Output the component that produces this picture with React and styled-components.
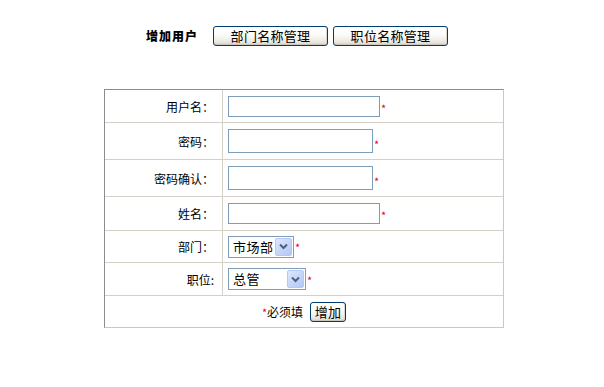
import React from "react";
import styled, { createGlobalStyle } from "styled-components";

const GlobalStyle = createGlobalStyle`
  html, body {
    margin: 0;
    padding: 0;
    background: #fff;
  }
  body {
    font-family: "Noto Sans CJK SC", "DejaVu Sans", sans-serif;
    font-size: 12px;
    color: #000;
  }
`;

const Page = styled.div`
  width: 400px;
  margin: 0 auto;
  padding: 26px 0 0 4px;
`;

const Header = styled.div`
  display: flex;
  align-items: center;
  height: 20px;
  padding-left: 42px;
`;

const Title = styled.span`
  font-weight: 900;
  font-size: 12px;
  letter-spacing: 1px;
  width: 67px;
  line-height: 20px;
`;

const XpButton = styled.button`
  height: ${(p) => p.$h || 20}px;
  width: ${(p) => (p.$w ? `${p.$w}px` : "auto")};
  padding: 0;
  margin-right: ${(p) => p.$mr || 0}px;
  border: 1px solid #003c74;
  border-radius: 3px;
  background: linear-gradient(#ffffff 0%, #fbfbf8 45%, #ece9e2 80%, #d6d3cc 100%);
  box-shadow: inset 0 -1px 0 #c9c6be, inset -1px 0 0 #dcd9d2;
  font-family: "Noto Sans CJK SC", "DejaVu Sans", sans-serif;
  font-size: 13px;
  line-height: 16px;
  letter-spacing: 0.3px;
  color: #000;
  cursor: pointer;
`;

const Table = styled.table`
  margin-top: 43px;
  width: 400px;
  border-collapse: separate;
  border-spacing: 0;
  border-top: 1px solid #8c8c8c;
  border-left: 1px solid #8c8c8c;
  border-right: 1px solid #c8c8c8;
  border-bottom: 1px solid #c8c8c8;
`;

const Row = styled.tr`
  height: ${(p) => p.$h}px;
  &:not(:last-child) td {
    border-bottom: 1px solid #d4d0c8;
  }
`;

const Label = styled.td`
  width: 109px;
  padding: 0 8px 0 0;
  text-align: right;
  border-right: 1px solid #d4d0c8;
  font-size: 12px;
  vertical-align: middle;
`;

const Field = styled.td`
  padding: 0 0 0 5px;
  vertical-align: middle;
`;

const Center = styled.td`
  text-align: center;
  vertical-align: middle;
`;

const Line = styled.div`
  display: flex;
  align-items: center;
  justify-content: ${(p) => (p.$center ? "center" : "flex-start")};
`;

const Input = styled.input`
  box-sizing: border-box;
  width: ${(p) => p.$w}px;
  height: ${(p) => p.$h}px;
  border: 1px solid #7f9db9;
  padding: 1px 3px;
  margin: 0;
  font-size: 12px;
  background: #fff;
`;

const Star = styled.span`
  color: #e0003a;
  font-size: 11px;
  line-height: 9px;
  align-self: center;
  margin-top: ${(p) => p.$mt || 4}px;
  margin-left: 1px;
`;

const Select = styled.div`
  box-sizing: border-box;
  display: flex;
  align-items: center;
  width: ${(p) => p.$w}px;
  height: 22px;
  border: 1px solid #7f9db9;
  background: #fff;
  padding: 1px 1px 1px 4px;
`;

const SelectText = styled.span`
  flex: 1;
  font-size: 13px;
  line-height: 18px;
  letter-spacing: 0.5px;
`;

const ArrowBox = styled.span`
  width: 17px;
  height: 18px;
  border-radius: 2px;
  border: 1px solid #b5c8f2;
  box-sizing: border-box;
  background: linear-gradient(135deg, #dfe8fd 0%, #c7d6f9 50%, #b4c8f6 100%);
  display: flex;
  align-items: center;
  justify-content: center;
`;

const Required = styled.span`
  font-size: 12px;
  margin-right: 7px;
  & > i {
    font-style: normal;
    color: #e0003a;
    font-size: 11px;
  }
`;

const Arrow = () => (
  <ArrowBox>
    <svg width="9" height="7" viewBox="0 0 9 7">
      <path d="M1 1.5 L4.5 5 L8 1.5" fill="none" stroke="#4d6185" strokeWidth="2" />
    </svg>
  </ArrowBox>
);

export default function App() {
  return (
    <Page>
      <GlobalStyle />
      <Header>
        <Title>增加用户</Title>
        <XpButton $w={115} $mr={5}>部门名称管理</XpButton>
        <XpButton $w={115}>职位名称管理</XpButton>
      </Header>
      <Table>
        <tbody>
          <Row $h={33}>
            <Label>用户名：</Label>
            <Field>
              <Line>
                <Input $w={152} $h={21} />
                <Star>*</Star>
              </Line>
            </Field>
          </Row>
          <Row $h={37}>
            <Label>密码：</Label>
            <Field>
              <Line>
                <Input type="password" $w={145} $h={24} />
                <Star $mt={6}>*</Star>
              </Line>
            </Field>
          </Row>
          <Row $h={37}>
            <Label>密码确认：</Label>
            <Field>
              <Line>
                <Input type="password" $w={145} $h={24} />
                <Star $mt={6}>*</Star>
              </Line>
            </Field>
          </Row>
          <Row $h={34}>
            <Label>姓名：</Label>
            <Field>
              <Line>
                <Input $w={152} $h={21} />
                <Star>*</Star>
              </Line>
            </Field>
          </Row>
          <Row $h={32}>
            <Label>部门：</Label>
            <Field>
              <Line>
                <Select $w={66}>
                  <SelectText>市场部</SelectText>
                  <Arrow />
                </Select>
                <Star $mt={2}>*</Star>
              </Line>
            </Field>
          </Row>
          <Row $h={33}>
            <Label>职位:</Label>
            <Field>
              <Line>
                <Select $w={78}>
                  <SelectText>总管</SelectText>
                  <Arrow />
                </Select>
                <Star $mt={2}>*</Star>
              </Line>
            </Field>
          </Row>
          <Row $h={31}>
            <Center colSpan={2}>
              <Line $center>
                <Required>
                  <i>*</i>必须填
                </Required>
                <XpButton $h={20} $w={36}>增加</XpButton>
              </Line>
            </Center>
          </Row>
        </tbody>
      </Table>
    </Page>
  );
}
